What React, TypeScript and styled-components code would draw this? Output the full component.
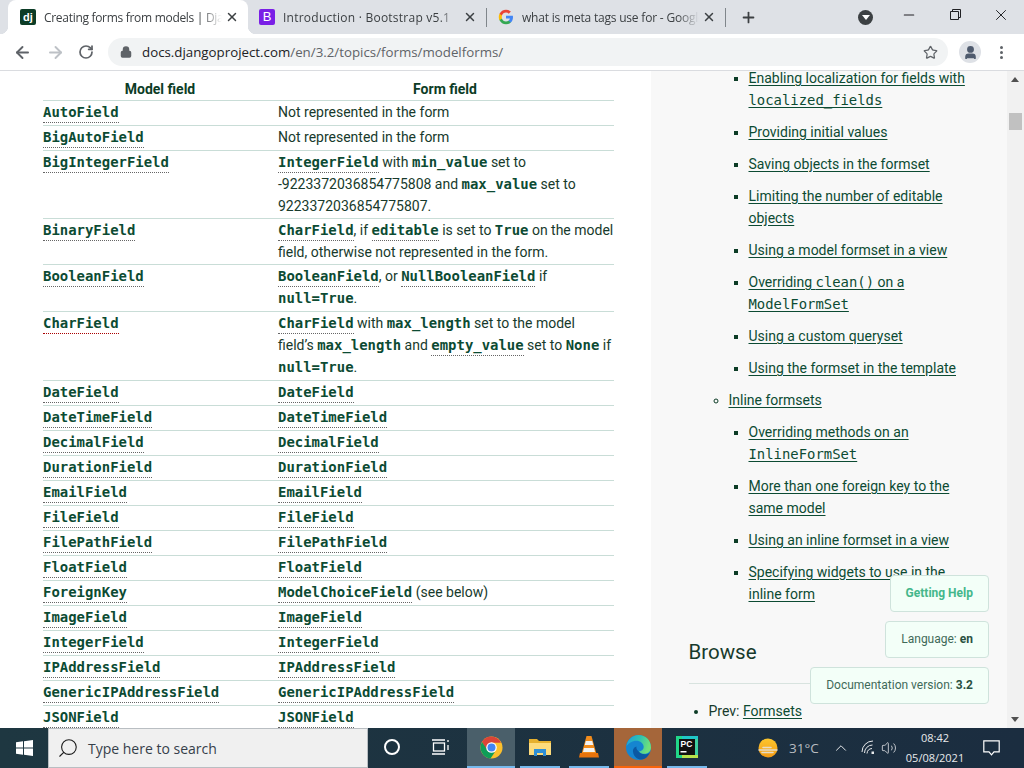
import React from "react";
import styled, { createGlobalStyle } from "styled-components";
import { ArrowLeft, ArrowRight, RotateCw, Lock, Star, X, Plus, Minus, Search, ChevronUp, Volume2, User } from "lucide-react";

const GlobalStyle = createGlobalStyle`
  html, body {
    margin: 0;
    height: 100%;
    overflow: hidden;
    background: #fff;
  }
  * { box-sizing: border-box; }
`;

const SAME_NAME_TOP = ["DateField", "DateTimeField", "DecimalField", "DurationField", "EmailField", "FileField", "FilePathField", "FloatField"];
const SAME_NAME_BOTTOM = ["ImageField", "IntegerField", "IPAddressField", "GenericIPAddressField", "JSONField"];

const Page = styled.div`
  width: 1024px;
  height: 768px;
  display: flex;
  flex-direction: column;
  overflow: hidden;
  font-family: Roboto, sans-serif;
`;

const TabStrip = styled.div`
  height: 34px;
  flex: none;
  background: #dee1e6;
  display: flex;
  align-items: flex-end;
  padding-left: 8px;
  font-family: "Open Sans", sans-serif;
  font-size: 12px;
  color: #3c4043;
`;

const Tab = styled.div<{ $active?: boolean; $w: number }>`
  width: ${(p) => p.$w}px;
  height: 34px;
  flex: none;
  display: flex;
  align-items: center;
  padding-left: ${(p) => (p.$active ? 12 : 11)}px;
  position: relative;
  background: ${(p) => (p.$active ? "#fff" : "transparent")};
  border-radius: 8px 8px 0 0;
  ${(p) =>
    p.$active &&
    `
    &::before, &::after {
      content: "";
      position: absolute;
      bottom: 0;
      width: 8px;
      height: 8px;
    }
    &::before {
      left: -8px;
      background: radial-gradient(circle at 0 0, #dee1e6 8px, #fff 8.5px);
    }
    &::after {
      right: -8px;
      background: radial-gradient(circle at 100% 0, #dee1e6 8px, #fff 8.5px);
    }
  `}
`;

const TabTitle = styled.span<{ $ls: number }>`
  flex: 1;
  min-width: 0;
  margin-left: 8px;
  letter-spacing: ${(p) => p.$ls}px;
  white-space: nowrap;
  overflow: hidden;
  -webkit-mask-image: linear-gradient(90deg, #000 88%, transparent);
  mask-image: linear-gradient(90deg, #000 88%, transparent);
`;

const TabClose = styled.span`
  width: 20px;
  margin-right: 6px;
  flex: none;
  display: flex;
  justify-content: center;
  color: #3c4043;
`;

const TabSep = styled.div`
  width: 1px;
  height: 19px;
  flex: none;
  margin-bottom: 7px;
  background: #80868b;
`;

const Favicon = styled.div<{ $bg: string }>`
  width: 16px;
  height: 16px;
  flex: none;
  border-radius: 2px;
  background: ${(p) => p.$bg};
  color: #fff;
  font: bold 11px/16px "Liberation Sans", sans-serif;
  text-align: center;
`;

const BootstrapFavicon = styled(Favicon)`
  font-size: 13px;
  font-weight: 400;
`;

const NewTab = styled.div`
  width: 44px;
  height: 34px;
  flex: none;
  display: flex;
  align-items: center;
  justify-content: center;
  color: #3c4043;
`;

const WindowControls = styled.div`
  margin-left: auto;
  height: 34px;
  display: flex;
  align-items: flex-start;
  color: #202124;
`;

const ProfileDrop = styled.div`
  width: 15px;
  height: 15px;
  align-self: center;
  border-radius: 50%;
  background: #3c4043;
  margin-right: 13px;
  display: flex;
  align-items: center;
  justify-content: center;
  &::after {
    content: "";
    border: 4px solid transparent;
    border-top: 5px solid #fff;
    border-bottom: 0;
  }
`;

const WinButton = styled.div`
  width: 46px;
  height: 29px;
  display: flex;
  align-items: center;
  justify-content: center;
`;

const Toolbar = styled.div`
  height: 37px;
  flex: none;
  background: #fff;
  border-bottom: 1px solid #dadce0;
  display: flex;
  align-items: center;
  color: #5f6368;
`;

const NavButton = styled.div<{ $w: number; $faint?: boolean }>`
  width: ${(p) => p.$w}px;
  flex: none;
  display: flex;
  justify-content: center;
  color: ${(p) => (p.$faint ? "#bdc1c6" : "#5f6368")};
`;

const Omnibox = styled.div`
  width: 840px;
  height: 28px;
  margin-left: 2px;
  flex: none;
  border-radius: 14px;
  background: #f1f3f4;
  display: flex;
  align-items: center;
  padding: 0 10px 0 12px;
  font-family: "Open Sans", sans-serif;
  font-size: 13.3px;
  color: #5f6368;
`;

const Host = styled.span`
  color: #202124;
`;

const Url = styled.span`
  margin-left: 10px;
  flex: 1;
`;

const Avatar = styled.div`
  width: 22px;
  height: 22px;
  margin-left: 11px;
  flex: none;
  border-radius: 50%;
  background: #dee1e6;
  color: #4f5b6e;
  display: flex;
  align-items: center;
  justify-content: center;
`;

const Kebab = styled.div`
  margin-left: 19px;
  display: flex;
  flex-direction: column;
  gap: 2px;
  i {
    width: 3px;
    height: 3px;
    border-radius: 50%;
    background: #5f6368;
  }
`;

const Viewport = styled.div`
  flex: 1;
  min-height: 0;
  display: flex;
  position: relative;
  color: #173a2c;
  font-size: 14px;
  line-height: 22px;
`;

const Main = styled.div`
  width: 651px;
  flex: none;
  overflow: hidden;
  background: #fff;
  padding: 6px 37px 0 43px;
`;

const Row = styled.div<{ $h: number }>`
  height: ${(p) => p.$h}px;
  display: grid;
  grid-template-columns: 235px 336px;
  border-bottom: 1px solid #c9ddd7;
`;

const HeadRow = styled(Row)`
  font-weight: 700;
  text-align: center;
  padding: 1px 1px 0 0;
  grid-template-columns: 234px 336px;
  color: #0c3c26;
`;

const Code = styled.code`
  font-family: "DejaVu Sans Mono", monospace;
  font-size: 13.95px;
  line-height: 1;
  font-weight: 700;
  color: #0c4b33;
`;

const Ref = styled(Code)<{ $red?: boolean }>`
  border-bottom: 1px dotted ${(p) => (p.$red ? "#a00" : "#666")};
  padding-bottom: 2px;
`;

const Sidebar = styled.div`
  flex: 1;
  min-width: 0;
  overflow: hidden;
  background: #f8f8f8;
  padding: 0 37px 0 37.5px;
`;

const List = styled.ul<{ $kind: "disc" | "circle" | "square"; $indent: number }>`
  margin: 0;
  padding: 0 0 0 ${(p) => p.$indent}px;
  list-style-type: ${(p) => p.$kind};
`;

const ScrolledList = styled(List)`
  margin-top: -4px;
`;

const NestedList = styled(List)`
  margin-top: 10px;
`;

const Item = styled.li`
  margin-bottom: 10px;
  &::marker { color: #0c3c26; }
`;

const PlainItem = styled(Item)`
  list-style: none;
`;

const A = styled.a`
  color: #0c4b33;
  text-decoration: underline;
  text-underline-offset: 2px;
`;

const SideCode = styled.code`
  font-family: "DejaVu Sans Mono", monospace;
  font-size: 13.9px;
  line-height: 1;
`;

const Browse = styled.h2`
  margin: 33px 0 16px;
  font-weight: 400;
  font-size: 20.5px;
  line-height: 28px;
  padding-bottom: 17px;
  border-bottom: 1px solid #d8e3df;
`;

const Scrollbar = styled.div`
  width: 17px;
  flex: none;
  background: #f1f1f1;
  position: relative;
`;

const Arrow = styled.div<{ $down?: boolean }>`
  position: absolute;
  left: 4px;
  ${(p) => (p.$down ? "bottom: 6px;" : "top: 6px;")}
  border-style: solid;
  border-width: ${(p) => (p.$down ? "5px 4px 0" : "0 4px 5px")};
  border-color: ${(p) => (p.$down ? "#505050 transparent transparent" : "transparent transparent #505050")};
`;

const Thumb = styled.div`
  position: absolute;
  top: 42px;
  left: 2px;
  width: 13px;
  height: 17px;
  background: #c1c1c1;
`;

const Badge = styled.div<{ $top: number; $w: number; $help?: boolean }>`
  position: absolute;
  top: ${(p) => p.$top}px;
  left: ${(p) => 989 - p.$w}px;
  width: ${(p) => p.$w}px;
  height: 37px;
  background: #f3fff8;
  border: 1px solid #cfe3dc;
  border-radius: 4px;
  display: flex;
  align-items: center;
  justify-content: flex-end;
  padding: 0 15px 2px 0;
  font-size: 12px;
  color: ${(p) => (p.$help ? "#44b78b" : "#3f6a58")};
  font-weight: ${(p) => (p.$help ? 700 : 400)};
  b { color: #2a5141; margin-left: 3px; }
`;

const Taskbar = styled.div`
  height: 40px;
  flex: none;
  background: linear-gradient(90deg, #1e3741, #1b2d40);
  display: flex;
  align-items: stretch;
  color: #fff;
`;

const StartButton = styled.div`
  width: 48px;
  flex: none;
  display: flex;
  align-items: center;
  justify-content: center;
`;

const SearchBox = styled.div`
  width: 320px;
  flex: none;
  background: #f0f0f0;
  border: 1px solid #b9bec2;
  display: flex;
  align-items: center;
  padding-left: 8px;
  gap: 9px;
  font-family: "Open Sans", sans-serif;
  font-size: 14px;
  color: #36404a;
`;

const SearchGlyph = styled(Search)`
  transform: scaleX(-1);
  color: #1c1c1c;
`;

const TaskSlot = styled.div<{ $w?: number; $bg?: string; $bar?: string; $gap?: number }>`
  width: ${(p) => p.$w ?? 48}px;
  margin-right: ${(p) => p.$gap ?? 0}px;
  flex: none;
  display: flex;
  align-items: center;
  justify-content: center;
  background: ${(p) => p.$bg ?? "transparent"};
  border-bottom: 2px solid ${(p) => p.$bar ?? "transparent"};
`;

const CortanaRing = styled.div`
  width: 16px;
  height: 16px;
  border-radius: 50%;
  border: 2.5px solid #fff;
`;

const Tray = styled.div`
  margin-left: 51px;
  flex: 1;
  display: flex;
  align-items: center;
  font-family: "Open Sans", sans-serif;
  color: #e8eaec;
`;

const TrayItem = styled.div<{ $ml?: number }>`
  margin-left: ${(p) => p.$ml ?? 0}px;
  display: flex;
`;

const Temp = styled.span`
  font-size: 13.5px;
  margin-left: 11px;
  width: 41px;
  color: #b8bcc0;
`;

const Clock = styled.div`
  width: 70px;
  margin-left: 3px;
  text-align: center;
  font-size: 11px;
  line-height: 20px;
`;

const SideItem = ({ children }: { children: React.ReactNode }) => (
  <Item>
    <A href="#">{children}</A>
  </Item>
);

const GoogleG = () => (
  <svg width="16" height="16" viewBox="0 0 48 48">
    <path fill="#4285F4" d="M45 24.5c0-1.6-.1-3.1-.4-4.5H24v8.5h11.8c-.5 2.7-2 5-4.4 6.6v5.500h7.100C42.700 36.700 45 31.100 45 24.500z" />
    <path fill="#34A853" d="M24 46c5.900 0 10.900-2 14.500-5.300l-7.100-5.500c-2 1.300-4.500 2.100-7.400 2.100-5.700 0-10.500-3.800-12.200-9H4.500v5.700C8.100 41.100 15.500 46 24 46z" />
    <path fill="#FBBC05" d="M11.800 28.300c-.9-2.700-.9-5.700 0-8.500v-5.700H4.500c-3 6-3 13.900 0 19.900l7.300-5.700z" />
    <path fill="#EA4335" d="M24 10.700c3.200 0 6.100 1.100 8.400 3.300l6.300-6.300C34.900 4.100 29.900 2 24 2 15.500 2 8.100 6.900 4.500 14.100l7.300 5.700c1.700-5.300 6.500-9.100 12.200-9.100z" />
  </svg>
);

const WindowsLogo = () => (
  <svg width="17" height="16" viewBox="0 0 17 16" fill="#fff">
    <path d="M0 2.300 7 1.300V7.500H0zM8 1.200 17 0V7.500H8zM0 8.500H7V14.700L0 13.700zM8 8.500H17V16L8 14.800z" />
  </svg>
);

const ChromeLogo = () => (
  <svg width="23" height="23" viewBox="0 0 24 24">
    <circle cx="12" cy="12" r="11.5" fill="#fbc02d" />
    <path fill="#db4437" d="M12 .5a11.500 11.500 0 0 0-9.900 5.700L6.500 14 12 7h9.900A11.500 11.500 0 0 0 12 .5z" />
    <path fill="#0f9d58" d="M2.100 6.200A11.500 11.500 0 0 0 11 23.500l4.400-6.500-6.900-1z" />
    <circle cx="12" cy="12" r="5.5" fill="#fff" />
    <circle cx="12" cy="12" r="4.2" fill="#4285f4" />
  </svg>
);

const FolderIcon = () => (
  <svg width="22" height="19" viewBox="0 0 22 19">
    <path fill="#e6b02e" d="M0 1h8l2 2h12v14H0z" />
    <path fill="#fddb7c" d="M0 5h22v12H0z" />
    <path fill="#2f8fd6" d="M5 11h12v7h-3v-3H8v3H5z" />
  </svg>
);

const VlcIcon = () => (
  <svg width="20" height="24" viewBox="0 0 20 24">
    <path fill="#f28c1c" d="M7.500 1h5l5 18h-15z" />
    <path fill="#f3f3f3" d="M6.800 6h6.400l1 4H5.800zM5 13h10l1 4H4z" />
    <path fill="#e8730c" d="M1 18h18l1 4.500H0z" />
  </svg>
);

const EdgeIcon = () => (
  <svg width="25" height="25" viewBox="0 0 24 24">
    <defs>
      <linearGradient id="edgeTop" x1="0" y1="0" x2="1" y2="0.3">
        <stop offset="0" stopColor="#1b9de2" />
        <stop offset="0.55" stopColor="#2fc2b0" />
        <stop offset="1" stopColor="#6fe07a" />
      </linearGradient>
    </defs>
    <circle cx="12" cy="12" r="12" fill="#1585d0" />
    <path fill="url(#edgeTop)" d="M12 0c6.700 0 12 5 12 12 0 3.500-2.500 6-6.500 6-2.500 0-4.500-1-5-2.500 2.500 0 4.500-1.500 4.500-4C17 8 13.500 5.500 10 5.500 6 5.500 2 8 .5 11 1 5 6 0 12 0z" />
    <path fill="#0b58a2" d="M12 15.500c-1.500-1-2.200-2.500-2-4.500-3 1-4 3.500-3 6.500 1 3.500 4.500 6.500 8.500 6 3.500-.8 6-3 7.500-7-1.500 1.500-3 2-5 2-2.500 0-5-1.500-6-3z" />
  </svg>
);

const PyCharmIcon = () => (
  <svg width="22" height="22" viewBox="0 0 22 22">
    <path fill="#1fc7c9" d="M0 0h22v6H0z" />
    <path fill="#21d789" d="M0 0h6v22H0z" />
    <path fill="#b9e24a" d="M6 16h16v6H6z" />
    <path fill="#3fd0a0" d="M16 3h6v16h-6z" />
    <rect x="3" y="3" width="16" height="16" fill="#111" />
    <text x="4.5" y="11" fontFamily="Liberation Sans" fontWeight="700" fontSize="8.5" fill="#fff">PC</text>
    <rect x="4.5" y="15" width="6" height="1.5" fill="#fff" />
  </svg>
);

const WeatherIcon = () => (
  <svg width="20" height="20" viewBox="0 0 20 20">
    <defs>
      <linearGradient id="sun" x1="0" y1="0" x2="0" y2="1">
        <stop offset="0" stopColor="#fcc62d" />
        <stop offset="1" stopColor="#f49b15" />
      </linearGradient>
    </defs>
    <circle cx="10" cy="10" r="9.5" fill="url(#sun)" />
    <path d="M5 9.500h8M1 12h18M4 14.500h11" stroke="#e6dcc8" strokeWidth="1.6" strokeLinecap="round" />
  </svg>
);

const WifiIcon = () => (
  <svg width="16" height="16" viewBox="0 0 16 16" fill="none" stroke="#e8eaec" strokeWidth="1">
    <path d="M1 12a11 11 0 0 1 11-11M3.500 13a8 8 0 0 1 8-8M6 13.500a5.500 5.500 0 0 1 5-5" />
    <rect x="10.5" y="11.5" width="2.5" height="2.5" fill="#e8eaec" stroke="none" />
  </svg>
);

const TaskViewIcon = () => (
  <svg width="17" height="16" viewBox="0 0 17 16" fill="none" stroke="#fff" strokeWidth="1.3">
    <rect x="1.5" y="4" width="11" height="8" />
    <path d="M0 1h13M0 15h13M16 1v2M16 6v5" />
  </svg>
);

const NotifyIcon = () => (
  <svg width="17" height="16" viewBox="0 0 17 16" fill="none" stroke="#fff" strokeWidth="1.2">
    <path d="M.8.800h15.400v11H11l-2.500 3-2.500-3H.8z" />
  </svg>
);

export default function App() {
  return (
    <Page>
      <GlobalStyle />
      <TabStrip>
        <Tab $active $w={240}>
          <Favicon $bg="#0c3c26">dj</Favicon>
          <TabTitle $ls={-0.3}>Creating forms from models | Django</TabTitle>
          <TabClose><X size={14} strokeWidth={2.5} /></TabClose>
        </Tab>
        <Tab $w={238}>
          <BootstrapFavicon $bg="#7a1fe6">B</BootstrapFavicon>
          <TabTitle $ls={0.24}>Introduction · Bootstrap v5.1</TabTitle>
          <TabClose><X size={14} strokeWidth={2.5} /></TabClose>
        </Tab>
        <TabSep />
        <Tab $w={238}>
          <GoogleG />
          <TabTitle $ls={-0.2}>what is meta tags use for - Google Search</TabTitle>
          <TabClose><X size={14} strokeWidth={2.5} /></TabClose>
        </Tab>
        <TabSep />
        <NewTab><Plus size={17} strokeWidth={2.5} /></NewTab>
        <WindowControls>
          <ProfileDrop />
          <WinButton><Minus size={16} strokeWidth={1.8} /></WinButton>
          <WinButton>
            <svg width="11" height="11" viewBox="0 0 11 11" fill="none" stroke="#202124">
              <path d="M.5 2.500h8v8h-8zM2.500 2.500v-2h8v8h-2" />
            </svg>
          </WinButton>
          <WinButton><X size={18} strokeWidth={1.3} /></WinButton>
        </WindowControls>
      </TabStrip>
      <Toolbar>
        <NavButton $w={44}><ArrowLeft size={19} strokeWidth={2.4} /></NavButton>
        <NavButton $w={22} $faint><ArrowRight size={19} strokeWidth={2.4} /></NavButton>
        <NavButton $w={40}><RotateCw size={16} strokeWidth={2.6} /></NavButton>
        <Omnibox>
          <Lock size={12} strokeWidth={3} fill="#5f6368" />
          <Url><Host>docs.djangoproject.com</Host>/en/3.2/topics/forms/modelforms/</Url>
          <Star size={15} strokeWidth={2} />
        </Omnibox>
        <Avatar><User size={15} strokeWidth={3} fill="#4f5b6e" /></Avatar>
        <Kebab><i /><i /><i /></Kebab>
      </Toolbar>
      <Viewport>
        <Main>
          <HeadRow $h={24}><span>Model field</span><span>Form field</span></HeadRow>
          <Row $h={25}><span><Ref>AutoField</Ref></span><span>Not represented in the form</span></Row>
          <Row $h={25}><span><Ref>BigAutoField</Ref></span><span>Not represented in the form</span></Row>
          <Row $h={68}>
            <span><Ref>BigIntegerField</Ref></span>
            <span><Ref>IntegerField</Ref> with <Code>min_value</Code> set to -9223372036854775808 and <Code>max_value</Code> set to 9223372036854775807.</span>
          </Row>
          <Row $h={46}>
            <span><Ref>BinaryField</Ref></span>
            <span><Ref>CharField</Ref>, if <Ref>editable</Ref> is set to <Code>True</Code> on the model field, otherwise not represented in the form.</span>
          </Row>
          <Row $h={47}>
            <span><Ref>BooleanField</Ref></span>
            <span><Ref>BooleanField</Ref>, or <Ref>NullBooleanField</Ref> if <Code>null=True</Code>.</span>
          </Row>
          <Row $h={69}>
            <span><Ref $red>CharField</Ref></span>
            <span><Ref>CharField</Ref> with <Code>max_length</Code> set to the model field’s <Code>max_length</Code> and <Ref>empty_value</Ref> set to <Code>None</Code> if <Code>null=True</Code>.</span>
          </Row>
          {SAME_NAME_TOP.map((n) => (
            <Row key={n} $h={25}><span><Ref>{n}</Ref></span><span><Ref>{n}</Ref></span></Row>
          ))}
          <Row $h={25}><span><Ref>ForeignKey</Ref></span><span><Ref>ModelChoiceField</Ref> (see below)</span></Row>
          {SAME_NAME_BOTTOM.map((n) => (
            <Row key={n} $h={25}><span><Ref>{n}</Ref></span><span><Ref>{n}</Ref></span></Row>
          ))}
        </Main>
        <Sidebar>
          <ScrolledList $kind="circle" $indent={40}>
            <PlainItem>
              <List $kind="square" $indent={20}>
                <SideItem>Enabling localization for fields with <SideCode>localized_fields</SideCode></SideItem>
                <SideItem>Providing initial values</SideItem>
                <SideItem>Saving objects in the formset</SideItem>
                <SideItem>Limiting the number of editable objects</SideItem>
                <SideItem>Using a model formset in a view</SideItem>
                <SideItem>Overriding <SideCode>clean()</SideCode> on a <SideCode>ModelFormSet</SideCode></SideItem>
                <SideItem>Using a custom queryset</SideItem>
                <SideItem>Using the formset in the template</SideItem>
              </List>
            </PlainItem>
            <Item>
              <A href="#">Inline formsets</A>
              <NestedList $kind="square" $indent={20}>
                <SideItem>Overriding methods on an <SideCode>InlineFormSet</SideCode></SideItem>
                <SideItem>More than one foreign key to the same model</SideItem>
                <SideItem>Using an inline formset in a view</SideItem>
                <SideItem>Specifying widgets to use in the inline form</SideItem>
              </NestedList>
            </Item>
          </ScrolledList>
          <Browse>Browse</Browse>
          <List $kind="disc" $indent={20}>
            <Item>Prev: <A href="#">Formsets</A></Item>
          </List>
        </Sidebar>
        <Scrollbar><Arrow /><Thumb /><Arrow $down /></Scrollbar>
        <Badge $top={504} $w={99} $help>Getting Help</Badge>
        <Badge $top={550} $w={104}>Language: <b>en</b></Badge>
        <Badge $top={596} $w={179}>Documentation version: <b>3.2</b></Badge>
      </Viewport>
      <Taskbar>
        <StartButton><WindowsLogo /></StartButton>
        <SearchBox><SearchGlyph size={22} strokeWidth={1.2} />Type here to search</SearchBox>
        <TaskSlot><CortanaRing /></TaskSlot>
        <TaskSlot $gap={3}><TaskViewIcon /></TaskSlot>
        <TaskSlot $w={48} $bg="#4a5f6a" $bar="#76b9ed" $gap={5}><ChromeLogo /></TaskSlot>
        <TaskSlot $w={40} $bar="#76b9ed" $gap={9}><FolderIcon /></TaskSlot>
        <TaskSlot $w={40} $bar="#76b9ed" $gap={5}><VlcIcon /></TaskSlot>
        <TaskSlot $w={48} $bg="#a5663a" $bar="#f7630c" $gap={5}><EdgeIcon /></TaskSlot>
        <TaskSlot $w={40} $bar="#76b9ed"><PyCharmIcon /></TaskSlot>
        <Tray>
          <WeatherIcon />
          <Temp>31°C</Temp>
          <TrayItem $ml={2}><ChevronUp size={18} strokeWidth={1.3} /></TrayItem>
          <TrayItem $ml={11}><WifiIcon /></TrayItem>
          <TrayItem $ml={4}><Volume2 size={16} strokeWidth={1.2} /></TrayItem>
          <Clock>08:42<br />05/08/2021</Clock>
          <TrayItem $ml={13}><NotifyIcon /></TrayItem>
        </Tray>
      </Taskbar>
    </Page>
  );
}
